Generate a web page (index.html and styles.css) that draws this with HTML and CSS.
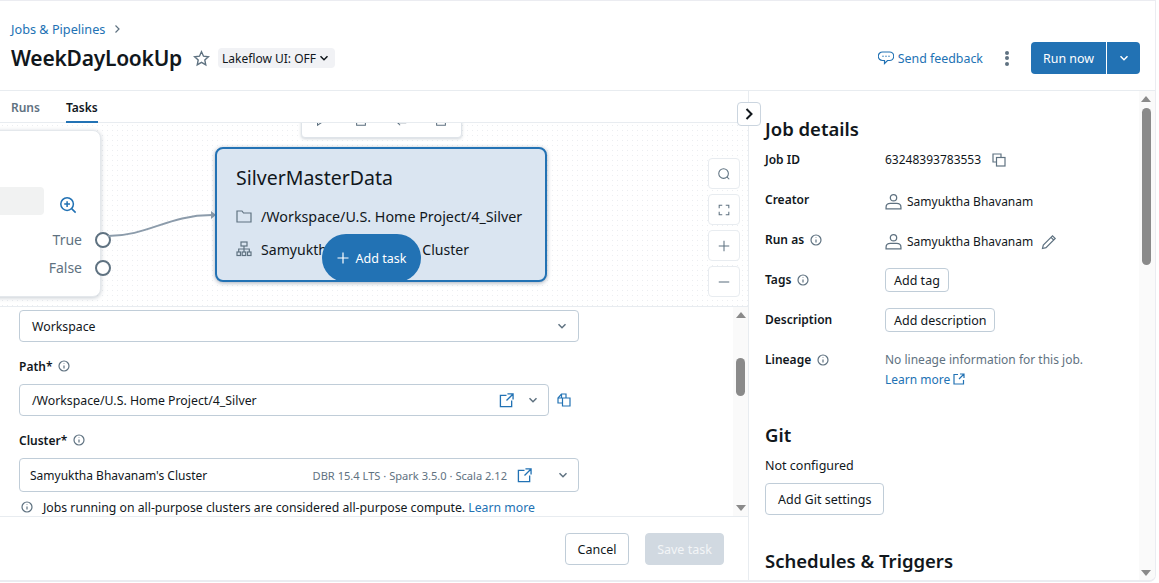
FILE: index.html
```html
<!DOCTYPE html>
<html lang="en">
<head>
  <meta charset="UTF-8" />
  <meta name="viewport" content="width=device-width, initial-scale=1.0" />
  <title>WeekDayLookUp</title>
  <link rel="stylesheet" href="styles.css">
</head>
<body>
  <div class="app">
    <header class="page-header">
      <div class="header-left">
        <div class="crumbs">
          <a class="link" href="#">Jobs &amp; Pipelines</a>
          <svg class="crumb-arrow" viewBox="0 0 8 10"><path d="M2.5 1.5 6 5 2.5 8.5"/></svg>
        </div>
        <div class="title-row">
          <h1>WeekDayLookUp</h1>
          <svg class="star" viewBox="0 0 16 16"><path d="M8 1.6l1.9 4.2 4.6.5-3.4 3.1.9 4.5L8 11.6l-4 2.3.9-4.5L1.500 6.300l4.600-.5z"/></svg>
          <span class="lakeflow">Lakeflow UI: OFF
            <svg class="chev-sm" viewBox="0 0 10 10"><path d="M1.500 3.200 5 6.700l3.500-3.500"/></svg>
          </span>
        </div>
      </div>
      <div class="header-right">
        <a class="feedback" href="#">
          <svg class="bubble" viewBox="0 0 16 16"><path d="M4.500 2h7a4.200 4.200 0 0 1 0 8.500H9.500L6.500 13.500v-3h-2a4.200 4.200 0 0 1 0-8.500z"/><circle cx="5" cy="6.300" r=".7"/><circle cx="8" cy="6.300" r=".7"/><circle cx="11" cy="6.300" r=".7"/></svg>
          Send feedback
        </a>
        <span class="kebab"><i></i><i></i><i></i></span>
        <div class="run-group">
          <button class="run-now">Run now</button>
          <button class="run-more"><svg class="chev-sm" viewBox="0 0 10 10"><path d="M1.500 3.200 5 6.700l3.500-3.500"/></svg></button>
        </div>
      </div>
    </header>

    <div class="content">
      <main class="left">
        <nav class="tabs">
          <span class="tab">Runs</span>
          <span class="tab active">Tasks</span>
        </nav>

        <section class="canvas">
          <div class="cond-node">
            <div class="cond-input"></div>
            <svg class="zoom-icon" viewBox="0 0 20 20"><circle cx="9" cy="9" r="7"/><path d="M14 14l4.500 4.500M9 5.800v6.400M5.800 9h6.400"/></svg>
            <div class="port-label port-true">True</div>
            <div class="port-label port-false">False</div>
            <span class="port port-a"></span>
            <span class="port port-b"></span>
          </div>

          <svg class="edge" viewBox="0 0 120 40"><path d="M0 24C40 24 60 3 104 3"/><path class="edge-head" d="M103 -1l5 4-5 4z"/></svg>

          <div class="node-toolbar">
            <svg viewBox="0 0 16 16"><path d="M4 2l9 6-9 6z"/></svg>
            <svg viewBox="0 0 16 16"><rect x="3" y="5" width="10" height="9"/><path d="M3 10V3h7"/></svg>
            <svg viewBox="0 0 16 16"><path d="M2 9h10l-3-3M14 11H4l3 3"/></svg>
            <svg viewBox="0 0 16 16"><path d="M2 4h12M3 4v10h10V4M6 4V2h4v2"/></svg>
          </div>

          <div class="task-node">
            <div class="task-name">SilverMasterData</div>
            <div class="task-line">
              <svg viewBox="0 0 16 16"><path d="M1 3h5l1.500 2H15v9H1z"/></svg>
              /Workspace/U.S. Home Project/4_Silver
            </div>
            <div class="task-line task-cluster">
              <svg viewBox="0 0 16 16"><rect x="5" y="1" width="6" height="4"/><rect x="1" y="11" width="3.500" height="3.500"/><rect x="6.200" y="11" width="3.500" height="3.500"/><rect x="11.500" y="11" width="3.500" height="3.500"/><path d="M8 5v6M2.700 11V8h10.600v3"/></svg>
              Samyuktha Bhavanam's Cluster
            </div>
            <button class="add-task">
              <svg viewBox="0 0 12 12"><path d="M6 .5v11M.5 6h11"/></svg>
              Add task
            </button>
          </div>

          <div class="canvas-tools">
            <span class="tool"><svg viewBox="0 0 16 16"><circle cx="7.500" cy="7.500" r="5.500"/><path d="M11.500 11.500l2.500 2.500"/></svg></span>
            <span class="tool"><svg viewBox="0 0 16 16"><path d="M2.500 6V2.500H6M10 2.500h3.500V6M13.500 10v3.500H10M6 13.500H2.500V10"/></svg></span>
            <span class="tool"><svg viewBox="0 0 16 16"><path d="M8 2v12M2 8h12"/></svg></span>
            <span class="tool"><svg viewBox="0 0 16 16"><path d="M2 8h12"/></svg></span>
          </div>
        </section>

        <section class="form-area">
          <div class="form-inner">
            <div class="select select-full">
              <span>Workspace</span>
              <svg class="chev" viewBox="0 0 10 10"><path d="M1.500 3.200 5 6.700l3.500-3.500"/></svg>
            </div>

            <div class="field-label">Path* <svg class="info" viewBox="0 0 12 12"><circle cx="6" cy="6" r="5"/><path d="M6 5.500v3M6 3.400v.6"/></svg></div>
            <div class="path-row">
              <div class="select select-path">
                <span>/Workspace/U.S. Home Project/4_Silver</span>
                <svg class="ext" viewBox="0 0 16 16"><path d="M8 2.500H1.500v12h12V8M9 1h6v6M15 1 8 8"/></svg>
                <svg class="chev" viewBox="0 0 10 10"><path d="M1.500 3.200 5 6.700l3.500-3.500"/></svg>
              </div>
              <svg class="copy-blue" viewBox="0 0 14 14"><path d="M5.500 5h7.500v8H5.500zM5.500 10H1V5l3.500-4H9v4"/><path d="M1 5h3.500V1"/></svg>
            </div>

            <div class="field-label">Cluster* <svg class="info" viewBox="0 0 12 12"><circle cx="6" cy="6" r="5"/><path d="M6 5.500v3M6 3.400v.6"/></svg></div>
            <div class="select select-full select-cluster">
              <span class="cluster-name">Samyuktha Bhavanam's Cluster</span>
              <span class="cluster-meta">DBR 15.4 LTS · Spark 3.5.0 · Scala 2.12</span>
              <svg class="ext" viewBox="0 0 16 16"><path d="M8 2.500H1.500v12h12V8M9 1h6v6M15 1 8 8"/></svg>
              <svg class="chev" viewBox="0 0 10 10"><path d="M1.500 3.200 5 6.700l3.500-3.500"/></svg>
            </div>
            <div class="hint">
              <svg class="info" viewBox="0 0 12 12"><circle cx="6" cy="6" r="5"/><path d="M6 5.500v3M6 3.400v.6"/></svg>
              <span>Jobs running on all-purpose clusters are considered all-purpose compute. <a class="link" href="#">Learn more</a></span>
            </div>
          </div>
          <div class="scrollbar form-scroll"><b class="arrow-up"></b><b class="thumb"></b><b class="arrow-down"></b></div>
        </section>

        <footer class="form-footer">
          <button class="btn btn-cancel">Cancel</button>
          <button class="btn btn-disabled">Save task</button>
        </footer>

        <button class="collapse"><svg viewBox="0 0 10 14"><path d="M2.500 2 7.500 7l-5 5"/></svg></button>
      </main>

      <aside class="details">
        <div class="details-inner">
          <h2>Job details</h2>
          <dl class="info-rows">
            <div class="row"><dt>Job ID</dt><dd>63248393783553<svg class="copy" viewBox="0 0 14 14"><path d="M9 4V1H1v8h3"/><rect x="4.500" y="4.500" width="8.500" height="8.500"/></svg></dd></div>
            <div class="row"><dt>Creator</dt><dd class="person"><svg class="user" viewBox="0 0 16 16"><circle cx="8" cy="4.500" r="3"/><path d="M1 15v-1.500C1 11 3 9.800 5 9.800h6c2 0 4 1.200 4 3.700V15z"/></svg>Samyuktha Bhavanam</dd></div>
            <div class="row"><dt>Run as <svg class="info" viewBox="0 0 12 12"><circle cx="6" cy="6" r="5"/><path d="M6 5.500v3M6 3.400v.6"/></svg></dt><dd class="person"><svg class="user" viewBox="0 0 16 16"><circle cx="8" cy="4.500" r="3"/><path d="M1 15v-1.500C1 11 3 9.800 5 9.800h6c2 0 4 1.200 4 3.700V15z"/></svg>Samyuktha Bhavanam <svg class="pencil" viewBox="0 0 16 16"><path d="M1.500 14.500l.8-3.500L11.500 1.800l2.700 2.700L5 13.700zM10 3.300l2.700 2.700"/></svg></dd></div>
            <div class="row"><dt>Tags <svg class="info" viewBox="0 0 12 12"><circle cx="6" cy="6" r="5"/><path d="M6 5.500v3M6 3.400v.6"/></svg></dt><dd><button class="btn-sm">Add tag</button></dd></div>
            <div class="row"><dt>Description</dt><dd><button class="btn-sm">Add description</button></dd></div>
            <div class="row"><dt>Lineage <svg class="info" viewBox="0 0 12 12"><circle cx="6" cy="6" r="5"/><path d="M6 5.500v3M6 3.400v.6"/></svg></dt><dd class="muted">No lineage information for this job.<br><a class="link" href="#">Learn more <svg class="ext-sm" viewBox="0 0 12 12"><path d="M5 1.500H1v9.500h9.500V7M7 1h4v4M11 1 6 6"/></svg></a></dd></div>
          </dl>
          <h2 class="git">Git</h2>
          <p class="plain">Not configured</p>
          <button class="btn btn-git">Add Git settings</button>
          <h2 class="schedules">Schedules &amp; Triggers</h2>
        </div>
        <div class="scrollbar side-scroll"><b class="arrow-up"></b><b class="thumb"></b><b class="arrow-down"></b></div>
      </aside>
    </div>
  </div>
</body>
</html>
```
FILE: styles.css
```css
* {
  box-sizing: border-box;
}
html, body {
  height: 100%;
}
body {
  margin: 0;
  background: #fff;
  font-family: "Noto Sans", "Open Sans", sans-serif;
  font-size: 13px;
  color: #11171c;
  overflow: hidden;
}
svg {
  fill: none;
  stroke: currentColor;
  stroke-width: 1.2;
  flex: none;
}
button {
  font-family: inherit;
}
.link {
  color: #2272b4;
  text-decoration: none;
}
.app {
  width: 1156px;
  height: 582px;
  background: #fff;
  border: solid #ebecf1;
  border-width: 1px 1px 2px 0;
  border-radius: 0 0 7px 0;
  display: flex;
  flex-direction: column;
  overflow: hidden;
}

/* header */
.page-header {
  height: 90px;
  flex: none;
  display: flex;
  justify-content: space-between;
  border-bottom: 1px solid #e8ecf0;
  padding: 20px 15px 0 11px;
}
.crumbs {
  display: flex;
  align-items: center;
  gap: 8px;
  height: 16px;
  font-size: 12.7px;
  margin-bottom: 6px;
}
.crumb-arrow {
  width: 8px;
  height: 10px;
  color: #5f7281;
}
.title-row {
  display: flex;
  align-items: center;
  height: 30px;
}
h1 {
  margin: 0;
  font-size: 21px;
  font-weight: 600;
  letter-spacing: -.25px;
  line-height: 30px;
}
.star {
  width: 17px;
  height: 17px;
  margin-left: 11px;
  color: #5f7281;
  stroke-width: 1.3;
}
.lakeflow {
  display: inline-flex;
  align-items: center;
  gap: 3px;
  height: 20px;
  margin-left: 8px;
  padding: 0 6px 0 4px;
  background: #f1f2f5;
  border-radius: 4px;
  font-size: 12px;
}
.chev-sm {
  width: 10px;
  height: 10px;
  stroke-width: 1.5;
}
.header-right {
  display: flex;
  align-items: center;
  height: 32px;
  margin-top: 21px;
}
.feedback {
  display: flex;
  align-items: center;
  gap: 4px;
  color: #2272b4;
  font-size: 12.4px;
  text-decoration: none;
}
.bubble {
  width: 16px;
  height: 16px;
}
.bubble circle {
  fill: currentColor;
  stroke: none;
}
.kebab {
  display: flex;
  flex-direction: column;
  gap: 1.5px;
  margin: 0 22px;
}
.kebab i {
  width: 4px;
  height: 4px;
  background: #5f7281;
  border-radius: 50%;
}
.run-group {
  display: flex;
  height: 32px;
  background: #2272b4;
  border-radius: 4px;
  overflow: hidden;
}
.run-now, .run-more {
  border: 0;
  background: none;
  color: #fff;
  font-size: 12.4px;
  padding: 0;
}
.run-now {
  width: 76px;
  border-right: 1px solid #fff;
}
.run-more {
  width: 33px;
  display: flex;
  align-items: center;
  justify-content: center;
}

.content {
  flex: 1;
  display: flex;
  min-height: 0;
}

/* left column */
.left {
  width: 749px;
  flex: none;
  position: relative;
  display: flex;
  flex-direction: column;
  border-right: 1px solid #e8ecf0;
}
.tabs {
  height: 32px;
  flex: none;
  display: flex;
  gap: 26px;
  padding-left: 11px;
  border-bottom: 1px solid #e8ecf0;
}
.tab {
  height: 32px;
  line-height: 33px;
  font-size: 12px;
  font-weight: 600;
  color: #5f7281;
}
.tab.active {
  color: #11171c;
  border-bottom: 2px solid #2272b4;
}
.collapse {
  position: absolute;
  top: 11px;
  left: 737px;
  width: 24px;
  height: 24px;
  padding: 0;
  display: flex;
  align-items: center;
  justify-content: center;
  background: #fff;
  border: 1px solid #cbd5df;
  border-radius: 4px;
  color: #11171c;
  z-index: 3;
}
.collapse svg {
  width: 10px;
  height: 14px;
  stroke-width: 2;
}

/* canvas: the nodes are free placed on it */
.canvas {
  position: relative;
  height: 184px;
  flex: none;
  overflow: hidden;
  border-bottom: 1px solid #e8ecf0;
  background-color: #fff;
  background-image: radial-gradient(#eceef1 .8px, transparent 1px);
  background-size: 5px 5px;
}
.cond-node {
  position: absolute;
  left: -40px;
  top: 7px;
  width: 141px;
  height: 167px;
  background: #fff;
  border: 1px solid #e4e8ec;
  border-radius: 8px;
  box-shadow: 0 1px 4px rgba(70, 90, 110, .3);
}
.cond-input {
  position: absolute;
  left: 0;
  top: 56px;
  width: 83px;
  height: 28px;
  background: #f1f2f2;
  border-radius: 4px;
}
.zoom-icon {
  position: absolute;
  left: 98px;
  top: 65px;
  width: 18px;
  height: 18px;
  color: #2272b4;
  stroke-width: 1.7;
}
.port-label {
  position: absolute;
  right: 18px;
  color: #5f7281;
  font-size: 14px;
  line-height: 20px;
}
.port-true { top: 99px; }
.port-false { top: 127px; }
.port {
  position: absolute;
  width: 16px;
  height: 16px;
  background: #fff;
  border: 2.5px solid #5f7281;
  border-radius: 50%;
}
.port-a { top: 101px; left: 134px; }
.port-b { top: 129px; left: 134px; }
.edge {
  position: absolute;
  left: 108px;
  top: 89px;
  width: 120px;
  height: 40px;
  overflow: visible;
  color: #8c9cab;
  stroke-width: 2;
}
.edge-head {
  fill: #8c9cab;
  stroke: none;
}
.node-toolbar {
  position: absolute;
  left: 301px;
  top: -16px;
  width: 161px;
  height: 31px;
  display: flex;
  align-items: flex-start;
  gap: 26px;
  padding: 0 12px;
  background: #fff;
  border: 1px solid #dfe4e9;
  border-radius: 4px;
  box-shadow: 0 1px 3px rgba(70, 90, 110, .25);
  color: #5f7281;
}
.node-toolbar svg {
  width: 14px;
  height: 14px;
  margin-top: 5px;
}
.task-node {
  position: absolute;
  left: 215px;
  top: 24px;
  width: 332px;
  height: 135px;
  padding: 15px 19px 0;
  background: #dae5f1;
  border: 2px solid #2272b4;
  border-radius: 8px;
  box-shadow: 0 1px 4px rgba(50, 70, 100, .45);
  font-size: 14.3px;
}
.task-name {
  font-size: 19.5px;
  line-height: 28px;
  margin-bottom: 12px;
}
.task-line {
  display: flex;
  align-items: center;
  gap: 9px;
  height: 24px;
  margin-bottom: 9px;
  white-space: nowrap;
}
.task-cluster {
  font-size: 14.1px;
}
.task-line svg {
  width: 16px;
  height: 16px;
  color: #5f7281;
}
.add-task {
  position: absolute;
  left: 105px;
  top: 85px;
  width: 99px;
  height: 48px;
  display: flex;
  align-items: center;
  justify-content: center;
  gap: 7px;
  background: #2272b4;
  border: 0;
  border-radius: 24px;
  color: #fff;
  font-size: 12.5px;
}
.add-task svg {
  width: 12px;
  height: 12px;
}
.canvas-tools {
  position: absolute;
  left: 708px;
  top: 35px;
  display: flex;
  flex-direction: column;
  gap: 5px;
}
.tool {
  width: 32px;
  height: 31px;
  display: flex;
  align-items: center;
  justify-content: center;
  background: #fff;
  border: 1px solid #e8ecf0;
  border-radius: 4px;
  color: #5f7281;
}
.tool svg {
  width: 14px;
  height: 14px;
}

/* task form */
.form-area {
  position: relative;
  height: 210px;
  flex: none;
  overflow: hidden;
  border-bottom: 1px solid #e8ecf0;
}
.form-inner {
  padding: 3px 0 0 19px;
}
.select {
  display: flex;
  align-items: center;
  height: 32px;
  width: 560px;
  padding: 0 11px 0 12px;
  background: #fff;
  border: 1px solid #c0cdd8;
  border-radius: 4px;
  font-size: 12.3px;
}
.select > span:first-child {
  flex: 1;
}
.chev {
  width: 10px;
  height: 10px;
  color: #5f7281;
  stroke-width: 1.5;
}
.field-label {
  display: flex;
  align-items: center;
  gap: 6px;
  height: 18px;
  margin: 15px 0 9px;
  font-size: 12px;
  font-weight: 600;
}
.info {
  width: 12px;
  height: 12px;
  color: #5f7281;
}
.path-row {
  display: flex;
  align-items: center;
  gap: 8px;
}
.select-path {
  width: 530px;
  padding-right: 10px;
}
.select-path .ext {
  margin-right: 14px;
}
.ext {
  width: 15px;
  height: 15px;
  color: #2272b4;
  stroke-width: 1.4;
}
.copy-blue {
  width: 14px;
  height: 14px;
  color: #2272b4;
}
.select-cluster {
  height: 34px;
  padding: 0 10px;
}
.cluster-name {
  font-size: 12px;
}
.cluster-meta {
  color: #5f7281;
  font-size: 11.1px;
  margin-right: 10px;
}
.select-cluster .ext {
  margin-right: 26px;
}
.hint {
  display: flex;
  align-items: center;
  gap: 10px;
  margin: 6px 0 0 2px;
  height: 18px;
  font-size: 12.25px;
  white-space: nowrap;
}
.scrollbar b {
  position: absolute;
  display: block;
}
.arrow-up, .arrow-down {
  width: 0;
  height: 0;
  border-left: 5px solid transparent;
  border-right: 5px solid transparent;
}
.arrow-up {
  border-bottom: 6px solid #8a8a8a;
}
.arrow-down {
  border-top: 6px solid #8a8a8a;
}
.thumb {
  width: 9px;
  background: #8a8a8a;
  border-radius: 5px;
}
.form-scroll {
  position: absolute;
  right: 0;
  top: 0;
  width: 15px;
  height: 100%;
  background: #fafafa;
}
.form-scroll .arrow-up { top: 5px; left: 3px; }
.form-scroll .arrow-down { bottom: 5px; left: 3px; }
.form-scroll .thumb { top: 51px; height: 38px; left: 3px; }
.form-footer {
  height: 64px;
  flex: none;
  display: flex;
  justify-content: flex-end;
  gap: 16px;
  padding: 16px 24px 0 0;
}
.btn {
  height: 32px;
  padding: 0 12px;
  background: #fff;
  border: 1px solid #c0cdd8;
  border-radius: 4px;
  color: #11171c;
  font-size: 12.5px;
}
.btn-cancel {
  width: 64px;
  padding: 0;
}
.btn-disabled {
  width: 79px;
  padding: 0;
  background: #d1d9e1;
  border-color: #d1d9e1;
  color: #f3f5f7;
}

/* right column */
.details {
  position: relative;
  flex: 1;
  overflow: hidden;
}
.details-inner {
  padding: 25px 0 0 16px;
}
h2 {
  margin: 0;
  font-size: 18.5px;
  font-weight: 600;
  line-height: 26px;
}
.info-rows {
  margin: 8px 0 0;
}
.row {
  display: flex;
  height: 40px;
}
.row dt {
  width: 120px;
  display: flex;
  align-items: flex-start;
  gap: 6px;
  font-weight: 600;
  font-size: 12px;
  line-height: 20px;
}
.row dt .info {
  margin-top: 4px;
}
.row dd {
  margin: 0;
  display: block;
  font-size: 12px;
  line-height: 20px;
}
.row dd.person {
  padding-top: 2px;
}
.copy {
  width: 14px;
  height: 14px;
  color: #5f7281;
  vertical-align: -3px;
  margin-left: 11px;
}
.user {
  width: 17px;
  height: 17px;
  color: #5f7281;
  vertical-align: -4px;
  margin-right: 5px;
}
.pencil {
  width: 16px;
  height: 16px;
  color: #5f7281;
  vertical-align: -4px;
  margin-left: 5px;
}
.btn-sm {
  height: 24px;
  margin-top: -2px;
  padding: 0 8px;
  background: #fff;
  border: 1px solid #c0cdd8;
  border-radius: 4px;
  color: #11171c;
  font-size: 12.5px;
}
.muted {
  color: #5f7281;
}
.ext-sm {
  width: 12px;
  height: 12px;
  vertical-align: -1px;
}
.git {
  margin-top: 32px;
}
.plain {
  margin: 9px 0 8px;
  font-size: 12.5px;
  line-height: 18px;
}
.btn-git {
  display: block;
}
.schedules {
  margin-top: 33px;
}
.side-scroll {
  position: absolute;
  right: 0;
  top: 0;
  width: 16px;
  height: 100%;
  background: #fafafa;
}
.side-scroll .arrow-up { top: 5px; left: 2px; }
.side-scroll .arrow-down { bottom: 4px; left: 2px; }
.side-scroll .thumb { top: 17px; height: 157px; left: 3px; }
```
